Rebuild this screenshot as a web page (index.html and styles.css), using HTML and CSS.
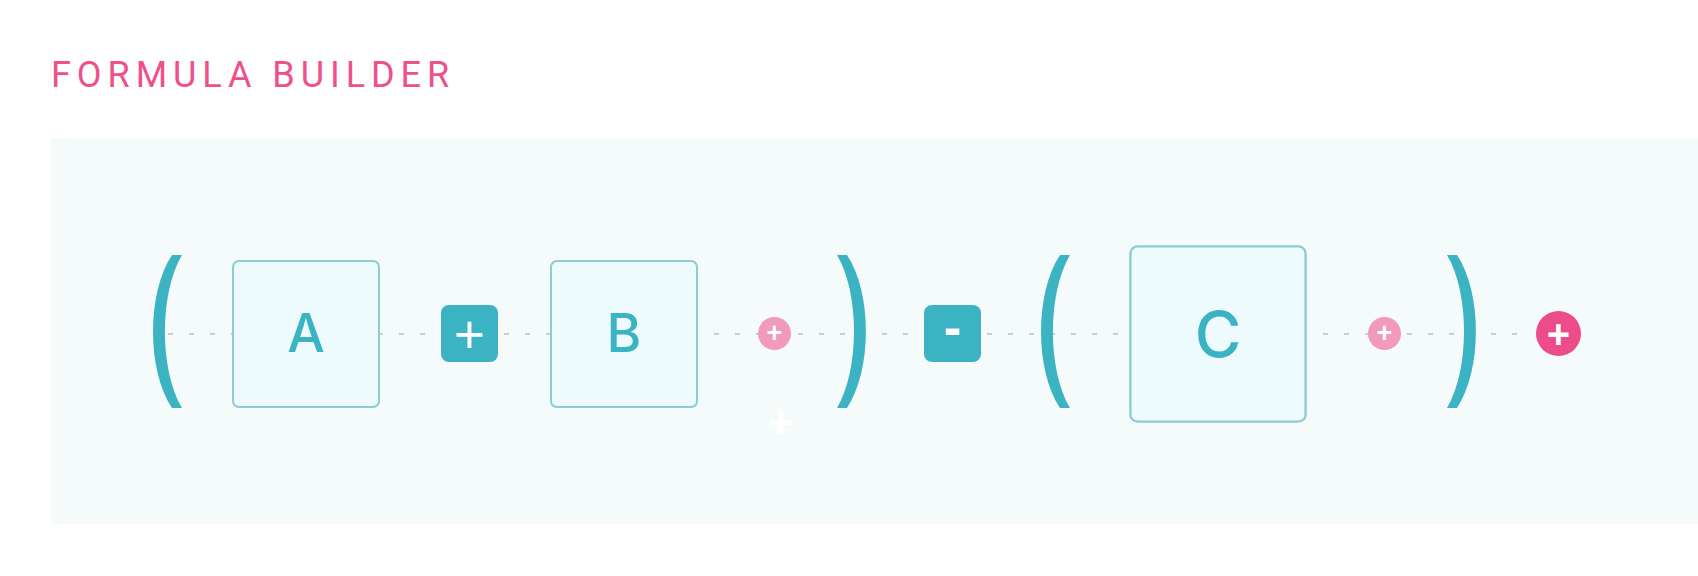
FILE: index.html
```html
<!DOCTYPE html>
<html lang="en">
<head>
<meta charset="utf-8">
<title>Formula Builder</title>
<link rel="stylesheet" href="styles.css">
</head>
<body>
<div class="page">
  <h1 class="title">FORMULA BUILDER</h1>
  <div class="canvas">
    <div class="formula">
      <svg class="paren paren-open" viewBox="0 0 30 153" aria-hidden="true"><path d="M19 0C-6.3 38-6.3 115 19 153L29 153C6.3 115 6.3 38 29 0Z"/></svg>
      <div class="operand">A</div>
      <div class="op op-plus">+</div>
      <div class="operand">B</div>
      <div class="slot"><span class="slot-btn">+</span><span class="ghost">+</span></div>
      <svg class="paren paren-close" viewBox="0 0 30 153" aria-hidden="true"><path d="M11 0C36.3 38 36.3 115 11 153L1 153C23.7 115 23.7 38 1 0Z"/></svg>
      <div class="op op-minus">-</div>
      <svg class="paren paren-open" viewBox="0 0 30 153" aria-hidden="true"><path d="M19 0C-6.3 38-6.3 115 19 153L29 153C6.3 115 6.3 38 29 0Z"/></svg>
      <div class="operand is-active">C</div>
      <div class="slot"><span class="slot-btn">+</span></div>
      <svg class="paren paren-close" viewBox="0 0 30 153" aria-hidden="true"><path d="M11 0C36.3 38 36.3 115 11 153L1 153C23.7 115 23.7 38 1 0Z"/></svg>
      <div class="add-term">+</div>
    </div>
  </div>
</div>
</body>
</html>
```

FILE: styles.css
```css
* {
  box-sizing: border-box;
}

html,
body {
  margin: 0;
  background: #ffffff;
  overflow: hidden;
}

body {
  font-family: Inter, "Liberation Sans", Arial, sans-serif;
}

.page {
  padding: 57px 0 0 51px;
}

.title {
  margin: 0 0 45px;
  font-family: Roboto, "Liberation Sans", Arial, sans-serif;
  font-size: 36px;
  line-height: 36px;
  font-weight: 400;
  letter-spacing: 0.165em;
  color: #ef4f8b;
}

.canvas {
  height: 386px;
  background: #f5fbfb;
  display: flex;
  align-items: center;
  padding: 5px 0 0 102px;
}

.formula {
  position: relative;
  display: flex;
  align-items: center;
}

.formula::before {
  content: "";
  position: absolute;
  left: 15px;
  right: 50px;
  top: calc(50% - 0.5px);
  height: 2px;
  background-image: repeating-linear-gradient(to right, #c9cfcf 0 5px, transparent 5px 21px);
}

.formula > * {
  position: relative;
  flex: none;
}

.paren {
  width: 30px;
  height: 153px;
  margin-bottom: 4px;
  fill: #3bb3c3;
  overflow: visible;
}

.operand {
  width: 148px;
  height: 148px;
  border: 2px solid #8dcbd5;
  border-radius: 7px;
  background: #edfbfe;
  display: grid;
  place-items: center;
  font-size: 53px;
  font-weight: 500;
  line-height: 1;
  color: #3bb3c3;
}

.operand.is-active {
  transform: scale(1.2);
}

.op {
  width: 57px;
  height: 57px;
  border-radius: 8px;
  background: #3bb3c3;
  color: #ffffff;
  display: grid;
  place-items: center;
  font-family: "Liberation Sans", Arial, sans-serif;
  font-size: 53px;
  font-weight: 400;
  line-height: 40px;
}

.op-plus {
  padding-top: 3px;
}

.op-minus {
  padding-bottom: 11px;
  font-weight: 700;
}

.slot {
  width: 33px;
  height: 33px;
}

.slot-btn,
.add-term {
  border-radius: 50%;
  color: #ffffff;
  display: grid;
  place-items: center;
  font-family: "Liberation Sans", Arial, sans-serif;
  font-weight: 700;
  line-height: 1;
}

.slot-btn {
  width: 33px;
  height: 33px;
  background: #f29abc;
  font-size: 27px;
}

.ghost {
  position: absolute;
  left: 10px;
  top: 84px;
  font-family: "Liberation Sans", Arial, sans-serif;
  font-size: 44px;
  font-weight: 700;
  line-height: 1;
  color: #ffffff;
}

.add-term {
  width: 45px;
  height: 45px;
  background: #ec4c89;
  font-size: 40px;
}

/* spacing between the terms of the formula */
.paren-open + .operand { margin-left: 49px; }
.operand + .op { margin-left: 61px; }
.op + .operand { margin-left: 52px; }
.operand + .slot { margin-left: 60px; }
.slot + .paren-close { margin-left: 45px; }
.paren-close + .op { margin-left: 58px; }
.op + .paren-open { margin-left: 60px; }
.paren-open + .operand.is-active { margin-left: 73px; }
.operand.is-active + .slot { margin-left: 76px; }
.paren-close + .add-term { margin-left: 60px; }
```
